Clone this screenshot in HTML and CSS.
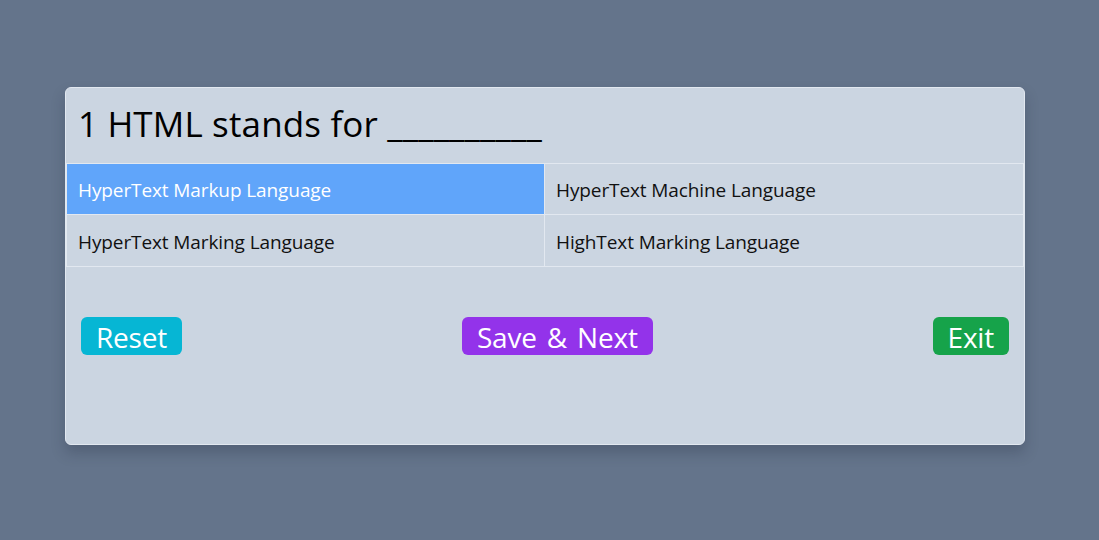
FILE: index.html
```html
<!DOCTYPE html>
<html>
<head>
<meta charset="utf-8">
<link rel="stylesheet" href="styles.css">
</head>
<body>
<main class="page">
  <section class="card">
    <h1 class="question">1 HTML stands for __________</h1>
    <div class="options">
      <div class="option selected">HyperText Markup Language</div>
      <div class="option">HyperText Machine Language</div>
      <div class="option">HyperText Marking Language</div>
      <div class="option">HighText Marking Language</div>
    </div>
    <div class="actions">
      <button class="btn btn-reset">Reset</button>
      <button class="btn btn-next">Save &amp; Next</button>
      <button class="btn btn-exit">Exit</button>
    </div>
  </section>
</main>
</body>
</html>
```

FILE: styles.css
```css
* { box-sizing: border-box; }
html, body { margin: 0; padding: 0; }
body {
  background: #64748b;
  font-family: "Open Sans", "Noto Sans", sans-serif;
  width: 1099px;
  height: 540px;
  overflow: hidden;
}
.page {
  display: flex;
  padding: 87px 0 0 65px;
}
.card {
  width: 960px;
  height: 358px;
  background: #cbd5e1;
  border: 1px solid #e2e8f0;
  border-radius: 6px;
  box-shadow: 0 8px 14px rgba(30, 41, 59, 0.25);
}
.question {
  margin: 0;
  height: 75px;
  padding: 12px 12px 0;
  font-size: 35px;
  font-weight: 400;
  line-height: 48px;
  color: #000;
  letter-spacing: 0.15px;
}
.options {
  display: grid;
  grid-template-columns: 1fr 1fr;
  border-top: 1px solid #e2e8f0;
}
.option {
  height: 51px;
  border: 1px solid #e2e8f0;
  border-top: none;
  padding: 2px 11px 0;
  display: flex;
  align-items: center;
  font-size: 19px;
  color: #111;
  letter-spacing: -0.1px;
}
.option:nth-child(n+3) { height: 52px; }
.option:nth-child(even) { border-left: none; }
.option.selected { background: #60a5fa; color: #fff; }
.actions {
  display: flex;
  justify-content: space-between;
  align-items: flex-start;
  padding: 50px 15px 0;
}
.btn {
  border: none;
  border-radius: 6px;
  color: #fff;
  font-family: inherit;
  font-size: 28px;
  line-height: 36px;
  height: 38px;
  padding: 2px 15px 0;
  letter-spacing: -0.2px;
  word-spacing: 3px;
  cursor: pointer;
}
.btn-reset { background: #06b6d4; }
.btn-next { background: #9333ea; }
.btn-exit { background: #16a34a; }
```
